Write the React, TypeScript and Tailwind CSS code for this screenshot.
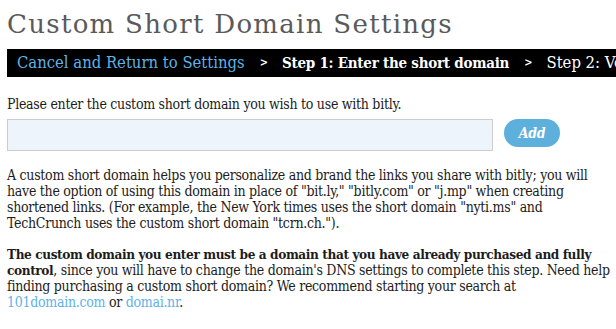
import React from 'react';

const slab = { fontFamily: '"DejaVu Serif", "Liberation Serif", serif' };

export default function App() {
  return (
    <div className="w-[616px] h-[329px] overflow-hidden bg-white pl-[7px]" style={slab}>
      <h1 className="pt-[9px] text-[26px] leading-[30px] text-[#5a5a5a] tracking-[1.3px] whitespace-nowrap">
        Custom Short Domain Settings
      </h1>

      {/* step bar */}
      <div className="mt-[10px] h-[28px] bg-black flex items-center whitespace-nowrap pl-[10px] text-[16.5px] [font-stretch:condensed]">
        <a className="text-[#5eb2e6]">Cancel and Return to Settings</a>
        <span className="text-white text-[11px] font-bold pl-[15px] pr-[14px]">&gt;</span>
        <span className="text-white font-bold text-[15px] tracking-[-0.25px]">Step 1: Enter the short domain</span>
        <span className="text-white text-[11px] font-bold pl-[15px] pr-[14px]">&gt;</span>
        <span className="text-white">Step 2: Verify the domain</span>
      </div>

      <div className="text-[14px] leading-[16px] text-[#1c1c1c] w-[609px] [font-stretch:condensed] tracking-[-0.28px]">
        <p className="mt-[19px]">Please enter the custom short domain you wish to use with bitly.</p>

        <div className="mt-[7px] flex items-start gap-[11px]">
          <input className="w-[486px] h-[32px] bg-[#edf4fc] border border-[#cccccc] outline-none" />
          <button className="w-[56px] h-[28px] rounded-full bg-[#5eb0dc] text-white font-bold italic text-[14px]">Add</button>
        </div>

        <p className="mt-[16px]">
          A custom short domain helps you personalize and brand the links you share with bitly; you will have the option of using this domain in place of "bit.ly," "bitly.com" or "j.mp" when creating shortened links. (For example, the New York times uses the short domain "nyti.ms" and TechCrunch uses the custom short domain "tcrn.ch.").
        </p>

        <p className="mt-[15px]">
          <b className="text-[13.5px] tracking-[-0.4px]">The custom domain you enter must be a domain that you have already purchased and fully control</b>, since you will have to change the domain's DNS settings to complete this step. Need help finding purchasing a custom short domain? We recommend starting your search at{' '}
          <a className="text-[#5eb2e6]">101domain.com</a> or <a className="text-[#5eb2e6]">domai.nr</a>.
        </p>
      </div>
    </div>
  );
}
